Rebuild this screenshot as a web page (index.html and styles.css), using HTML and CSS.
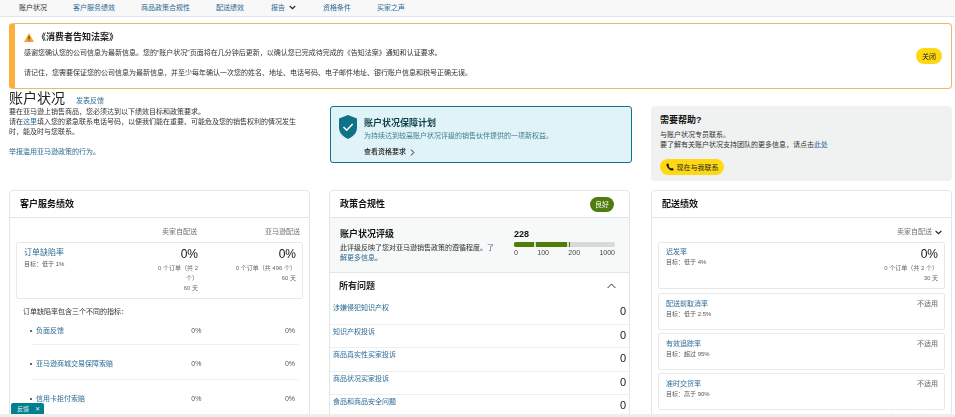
FILE: index.html
```html
<!DOCTYPE html>
<html lang="zh-CN">
<head>
    <meta charset="UTF-8">
    <meta name="viewport" content="width=device-width, initial-scale=1.0">
    <title>账户状况</title>
    <link rel="stylesheet" href="styles.css">
</head>
<body>

<nav class="top-nav">
    <a class="current">账户状况</a>
    <a>客户服务绩效</a>
    <a>商品政策合规性</a>
    <a>配送绩效</a>
    <a class="nav-report">报告
        <svg width="7" height="5" viewBox="0 0 7 5"><path d="M.8 1l2.7 2.6L6.200 1" fill="none" stroke="#222" stroke-width="1.200"/></svg>
    </a>
    <a>资格条件</a>
    <a>买家之声</a>
</nav>

<section class="notice">
    <div class="notice-body">
        <h4>
            <svg width="10" height="9" viewBox="0 0 10 9"><path d="M5 0l5 9H0z" fill="#f0a436"/><path d="M4.500 3h1v3h-1zM4.500 6.600h1v1h-1z" fill="#3a2a10"/></svg>
            《消费者告知法案》
        </h4>
        <p>感谢您确认您的公司信息为最新信息。您的“账户状况”页面将在几分钟后更新，以确认您已完成待完成的《告知法案》通知和认证要求。</p>
        <p>请记住，您需要保证您的公司信息为最新信息，并至少每年确认一次您的姓名、地址、电话号码、电子邮件地址、银行账户信息和税号正确无误。</p>
    </div>
    <button class="pill close-btn">关闭</button>
</section>

<div class="intro-row">
    <div class="intro">
        <div class="title-line"><h1>账户状况</h1><a>发表反馈</a></div>
        <p>要在亚马逊上销售商品，您必须达到以下绩效目标和政策要求。<br>请在<a>这里</a>填入您的紧急联系电话号码，以便我们能在重要、可能危及您的销售权利的情况发生时，能及时与您联系。</p>
        <p class="report-link"><a>举报滥用亚马逊政策的行为</a>。</p>
    </div>
    <div class="protect">
        <svg class="protect-icon" width="18" height="24" viewBox="0 0 18 24"><path d="M9 0l9 3.500v9c0 5.500-4 9.300-9 11.500-5-2.200-9-6-9-11.500v-9z" fill="#0f7286"/><path d="M4.500 12l3.200 3.200 6-6.200" fill="none" stroke="#fff" stroke-width="1.500"/></svg>
        <div>
            <h3>账户状况保障计划</h3>
            <p>为持续达到较高账户状况评级的销售伙伴提供的一项新权益。</p>
            <b>查看资格要求
                <svg width="5" height="7" viewBox="0 0 5 7"><path d="M1 .6l2.800 2.900L1 6.400" fill="none" stroke="#222" stroke-width="1"/></svg>
            </b>
        </div>
    </div>
    <div class="help">
        <h3>需要帮助?</h3>
        <p>与账户状况专员联系。<br>要了解有关账户状况支持团队的更多信息，请点击<a>此处</a></p>
        <button class="pill call-btn">
            <svg width="8" height="8" viewBox="0 0 8 8"><path d="M1.700.3L.5 1.200C.4 4.300 3.500 7.600 6.800 7.500l1-1.300-1.800-1.400-.9.700C4 5 3 4 2.500 2.900l.7-.9z" fill="#111"/></svg>
            现在与我联系
        </button>
    </div>
</div>

<div class="cards">
    <section class="card">
        <header class="card-head"><h2>客户服务绩效</h2></header>
        <div class="cs-body">
            <div class="col-labels"><span>卖家自配送</span><span>亚马逊配送</span></div>
            <div class="odr-box">
                <div class="odr-name">
                    <a>订单缺陷率</a>
                    <small>目标：低于 1%</small>
                </div>
                <div class="odr-val odr-fbm">
                    <strong>0%</strong>
                    <small>0 个订单（共 2 个）</small>
                    <small>60 天</small>
                </div>
                <div class="odr-val odr-fba">
                    <strong>0%</strong>
                    <small>0 个订单（共 496 个）</small>
                    <small>60 天</small>
                </div>
            </div>
            <p class="odr-note">订单缺陷率包含三个不同的指标：</p>
            <ul class="odr-list">
                <li><a>负面反馈</a><span>0%</span><span>0%</span></li>
                <li><a>亚马逊商城交易保障索赔</a><span>0%</span><span>0%</span></li>
                <li><a>信用卡拒付索赔</a><span>0%</span><span>0%</span></li>
            </ul>
        </div>
    </section>

    <section class="card">
        <header class="card-head">
            <h2>政策合规性</h2>
            <span class="badge">良好</span>
        </header>
        <div class="rating">
            <div class="rating-text">
                <h3>账户状况评级</h3>
                <p>此评级反映了您对亚马逊销售政策的遵循程度。<a>了解更多信息</a>。</p>
            </div>
            <div class="rating-meter">
                <b>228</b>
                <div class="meter">
                    <i class="seg-a"></i><i class="seg-b"></i><i class="seg-c"></i>
                </div>
                <div class="meter-scale"><span>0</span><span>100</span><span>200</span><span>1000</span></div>
            </div>
        </div>
        <div class="issues-head">
            <h3>所有问题</h3>
            <svg width="9" height="6" viewBox="0 0 9 6"><path d="M.6 5L4.500 1l3.900 4" fill="none" stroke="#333" stroke-width="1"/></svg>
        </div>
        <ul class="issues">
            <li><a>涉嫌侵犯知识产权</a><span>0</span></li>
            <li><a>知识产权投诉</a><span>0</span></li>
            <li><a>商品真实性买家投诉</a><span>0</span></li>
            <li><a>商品状况买家投诉</a><span>0</span></li>
            <li><a>食品和商品安全问题</a><span>0</span></li>
        </ul>
    </section>

    <section class="card card-ship">
        <header class="card-head"><h2>配送绩效</h2></header>
        <div class="ship-body">
            <div class="ship-select">卖家自配送
                <svg width="7" height="5" viewBox="0 0 7 5"><path d="M.6 1l2.900 2.700L6.400 1" fill="none" stroke="#222" stroke-width="1.100"/></svg>
            </div>
            <div class="ship-box ship-first">
                <div class="ship-name"><a>迟发率</a><small>目标：低于 4%</small></div>
                <div class="ship-val">
                    <strong>0%</strong>
                    <small>0 个订单（共 2 个）</small>
                    <small>30 天</small>
                </div>
            </div>
            <div class="ship-box">
                <div class="ship-name"><a>配送前取消率</a><small>目标：低于 2.5%</small></div>
                <span class="na">不适用</span>
            </div>
            <div class="ship-box">
                <div class="ship-name"><a>有效追踪率</a><small>目标：超过 95%</small></div>
                <span class="na">不适用</span>
            </div>
            <div class="ship-box">
                <div class="ship-name"><a>准时交货率</a><small>目标：高于 90%</small></div>
                <span class="na">不适用</span>
            </div>
            <p class="ship-more"><a>查看配送绩效政策</a></p>
        </div>
    </section>
</div>

<div class="feedback-tab"><span>反馈</span><span>✕</span></div>
<div class="bottom-strip"></div>

</body>
</html>
```

FILE: styles.css
```css
* {
    box-sizing: border-box;
}

html, body {
    height: 417px;
    overflow: hidden;
}

body {
    margin: 0;
    position: relative;
    background-color: #fff;
    color: #2b2f2f;
    font-family: "Liberation Sans", "Noto Sans CJK SC", sans-serif;
    font-size: 7px;
    line-height: 10px;
    filter: blur(0.3px);
}

h1, h2, h3, h4, p, ul {
    margin: 0;
    padding: 0;
}

a {
    color: #2c6a94;
}

svg {
    flex: none;
}

.top-nav {
    height: 17px;
    padding-left: 19px;
    display: flex;
    align-items: center;
    gap: 26px;
    background-color: #f8f8f8;
    border-bottom: 1px solid #e3e6e6;
    padding-bottom: 1px;
}

.top-nav .current {
    color: #333;
}

.nav-report {
    display: flex;
    align-items: center;
    gap: 4px;
    margin: 0 1px;
}

.notice {
    height: 66px;
    margin: 6px 3px 0 9px;
    padding: 0 9px 0 9px;
    display: flex;
    align-items: center;
    justify-content: space-between;
    border: 1px solid #eeb868;
    border-left: 6px solid #fbb03b;
    border-radius: 4px;
}

.notice-body {
    align-self: flex-start;
    margin-top: 7px;
}

.notice h4 {
    display: flex;
    align-items: center;
    gap: 3px;
    font-size: 9px;
    line-height: 12px;
    color: #222;
    margin-bottom: 5px;
}

.notice p {
    color: #333;
    margin-bottom: 10px;
}

.notice p:last-child {
    margin-bottom: 0;
}

.pill {
    border: none;
    background-color: #ffd814;
    color: #222;
    border-radius: 9px;
    font-family: inherit;
    font-size: 7px;
    height: 16px;
    padding: 0;
}

.close-btn {
    width: 26px;
    margin-top: -1px;
}

.intro-row {
    height: 101px;
    padding-left: 9px;
    display: flex;
}

.intro {
    width: 291px;
}

.title-line {
    display: flex;
    align-items: baseline;
    gap: 11px;
    height: 17px;
    margin-top: 1px;
}

.title-line h1 {
    font-size: 14px;
    line-height: 17px;
    font-weight: 400;
    color: #222;
}

.intro p {
    color: #333;
}

.report-link {
    margin-top: 10px;
}

.protect {
    width: 302px;
    height: 57px;
    margin: 17px 0 0 30px;
    padding: 10px 8px 0 8px;
    display: flex;
    gap: 7px;
    background-color: #e0f3f8;
    border: 1px solid #0f7286;
    border-radius: 3px;
}

.protect-icon {
    margin-top: -2px;
}

.protect h3 {
    font-size: 9px;
    line-height: 12px;
    color: #0f3f4a;
    margin-bottom: 2px;
}

.protect p {
    color: #3f7d8c;
    margin-bottom: 6px;
}

.protect b {
    display: flex;
    align-items: center;
    gap: 4px;
    color: #222;
    font-weight: 500;
}

.help {
    width: 301px;
    height: 75px;
    margin: 17px 0 0 19px;
    padding: 8px 9px;
    background-color: #f0f2f2;
    border-radius: 4px;
}

.help h3 {
    font-size: 9px;
    line-height: 12px;
    color: #111;
    margin-bottom: 4px;
}

.help p {
    color: #333;
    margin-bottom: 9px;
}

.call-btn {
    width: 64px;
    display: flex;
    align-items: center;
    justify-content: center;
    gap: 3px;
}

.cards {
    height: 227px;
    overflow: hidden;
    padding-left: 9px;
    display: flex;
    gap: 19px;
    align-items: flex-start;
}

.card {
    width: 301px;
    height: 260px;
    border: 1px solid #e3e6e6;
    border-radius: 4px;
}

.card-ship {
    margin-left: 2px;
}

.card-head {
    height: 27px;
    padding: 0 15px 0 10px;
    display: flex;
    align-items: center;
    justify-content: space-between;
    border-bottom: 1px solid #e3e6e6;
}

.card-head h2 {
    font-size: 9px;
    line-height: 12px;
    color: #111;
}

.cs-body {
    padding: 6px 6px 0;
}

.col-labels {
    height: 18px;
    padding: 3px 3px 0 0;
    display: flex;
    justify-content: flex-end;
    color: #6f7373;
    gap: 68px;
}

.odr-box {
    height: 57px;
    padding: 4px 6px 0 7px;
    display: flex;
    border: 1px solid #e8eaea;
    border-radius: 2px;
}

.odr-name {
    width: 127px;
}

.odr-name a {
    display: block;
    font-size: 8px;
    line-height: 12px;
}

.odr-name small, .ship-name small {
    display: block;
    font-size: 6px;
    line-height: 10px;
    color: #555;
}

.odr-val {
    text-align: right;
}

.odr-fbm {
    width: 47px;
}

.odr-fba {
    width: 98px;
}

.odr-val strong, .ship-val strong {
    display: block;
    font-size: 12px;
    line-height: 14px;
    font-weight: 400;
    color: #111;
    margin-bottom: 2px;
}

.odr-val small, .ship-val small {
    display: block;
    font-size: 6px;
    line-height: 10px;
    color: #666;
}

.odr-note {
    margin: 8px 0 0 7px;
    color: #333;
}

.odr-list {
    list-style: none;
    margin: 0 4px 0 16px;
}

.odr-list li {
    height: 35px;
    padding: 3px 4px 0;
    display: flex;
    align-items: center;
    border-bottom: 1px solid #eef0f0;
    color: #555;
}

.odr-list li:first-child {
    height: 28px;
    padding-top: 0;
}

.odr-list li:last-child {
    border-bottom: none;
}

.odr-list li::before {
    content: "";
    flex: none;
    width: 2px;
    height: 2px;
    margin: 0 4px 0 -6px;
    border-radius: 50%;
    background-color: #333;
}

.odr-list a {
    width: 119px;
}

.odr-list span {
    width: 47px;
    text-align: right;
}

.odr-list span + span {
    width: 94px;
}

.badge {
    width: 24px;
    height: 15px;
    line-height: 15px;
    text-align: center;
    background-color: #4d7c0f;
    color: #fff;
    border-radius: 8px;
}

.rating {
    height: 55px;
    padding: 10px 14px 0 10px;
    display: flex;
    gap: 20px;
    background-color: #f7f8f8;
    border-bottom: 1px solid #e3e6e6;
}

.rating-text {
    width: 154px;
}

.rating h3 {
    font-size: 9px;
    line-height: 12px;
    color: #111;
    margin-bottom: 3px;
}

.rating-meter {
    flex: 1;
}

.rating-meter b {
    display: block;
    font-size: 9px;
    line-height: 12px;
    color: #111;
    margin-bottom: 2px;
}

.meter {
    height: 5px;
    display: flex;
    gap: 2px;
    background-color: #d5dbdb;
    border-radius: 2px;
    overflow: hidden;
}

.meter i {
    display: block;
    background-color: #4e7e06;
    height: 100%;
}

.seg-a {
    width: 20px;
}

.seg-b {
    width: 31px;
}

.seg-c {
    width: 1px;
}

.meter-scale {
    display: flex;
    justify-content: space-between;
    color: #444;
    line-height: 9px;
    margin-top: 1px;
}

.issues-head {
    height: 28px;
    padding: 0 13px 2px 9px;
    display: flex;
    align-items: center;
    justify-content: space-between;
}

.issues-head h3 {
    font-size: 9px;
    line-height: 12px;
    color: #222;
}

.issues {
    list-style: none;
}

.issues li {
    height: 23.600px;
    padding: 2px 3px 0 3px;
    display: flex;
    justify-content: space-between;
    border-bottom: 1px solid #eef0f0;
}

.issues span {
    font-size: 11px;
    line-height: 14px;
    margin-top: 1px;
    color: #222;
}

.ship-body {
    padding: 6px 6px 0;
}

.ship-select {
    height: 18px;
    padding: 3px 3px 0 0;
    display: flex;
    justify-content: flex-end;
    gap: 3px;
    color: #6f7373;
}

.ship-select svg {
    margin-top: 3px;
}

.ship-box {
    height: 37px;
    margin-bottom: 3px;
    padding: 5px 6px 0 7px;
    display: flex;
    justify-content: space-between;
    border: 1px solid #e8eaea;
    border-radius: 2px;
}

.ship-first {
    height: 47px;
    margin-bottom: 4px;
    padding-top: 4px;
}

.ship-name a {
    display: block;
    line-height: 10px;
}

.ship-val {
    text-align: right;
}

.ship-val small {
    line-height: 10px;
}

.na {
    color: #666;
}

.ship-more {
    margin-top: 2px;
    text-align: right;
    padding-right: 1px;
}

.feedback-tab {
    position: absolute;
    left: 11px;
    top: 403px;
    width: 33px;
    height: 11px;
    padding: 0 4px 0 6px;
    display: flex;
    align-items: center;
    justify-content: space-between;
    background-color: #007f8e;
    color: #e6f5f6;
    font-size: 6px;
    border-radius: 2px 2px 0 0;
    z-index: 2;
}

.bottom-strip {
    position: absolute;
    left: 0;
    right: 0;
    top: 414px;
    height: 3px;
    background-color: #eeeeee;
    z-index: 1;
}
```
